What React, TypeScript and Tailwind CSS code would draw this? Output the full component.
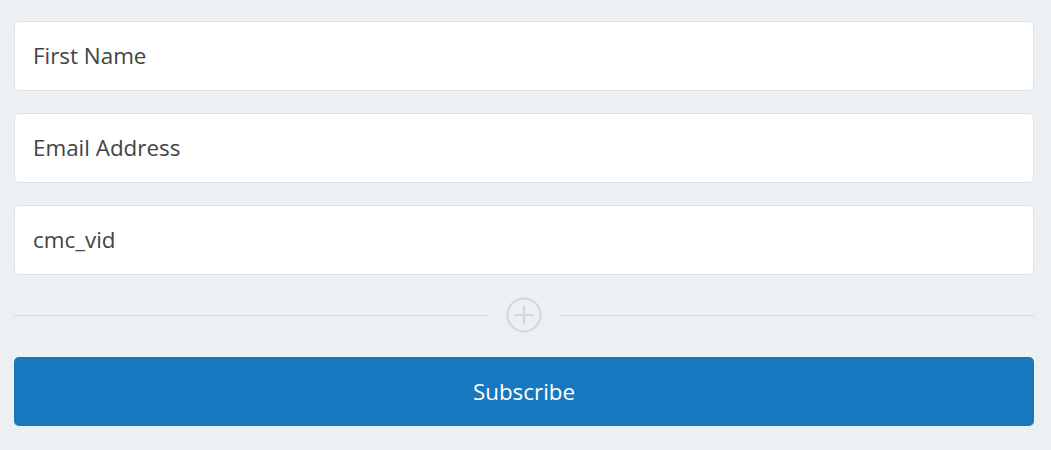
import React from 'react';

const fields = ['First Name', 'Email Address', 'cmc_vid'];

const PlusCircle = () => (
  <svg width="36" height="36" viewBox="0 0 36 36" fill="none" className="shrink-0">
    <circle cx="18" cy="18" r="16.5" stroke="#d2d6da" strokeWidth="2" />
    <path d="M18 8.5v19M8.5 18h19" stroke="#d2d6da" strokeWidth="2" />
  </svg>
);

export default function App() {
  return (
    <div
      className="w-[1051px] h-[450px] bg-[#ecf0f3] pl-[14px] pt-[21px]"
      style={{ fontFamily: '"Open Sans", sans-serif' }}
    >
      <div className="w-[1020px] flex flex-col">
        {fields.map((label) => (
          <div
            key={label}
            className="h-[70px] mb-[22px] bg-white border border-[#dfe3e7] rounded-[5px] flex items-center pl-[18px] text-[22.4px] text-[#444]"
          >
            {label}
          </div>
        ))}

        <div className="flex items-center h-[36px]">
          <div className="flex-1 h-px bg-[#d3d7da]" />
          <div className="mx-[17px]">
            <PlusCircle />
          </div>
          <div className="flex-1 h-px bg-[#d3d7da]" />
        </div>

        <button className="mt-[24px] h-[69px] rounded-[5px] bg-[#1777bf] text-white text-[22.4px] flex items-center justify-center">
          Subscribe
        </button>
      </div>
    </div>
  );
}
